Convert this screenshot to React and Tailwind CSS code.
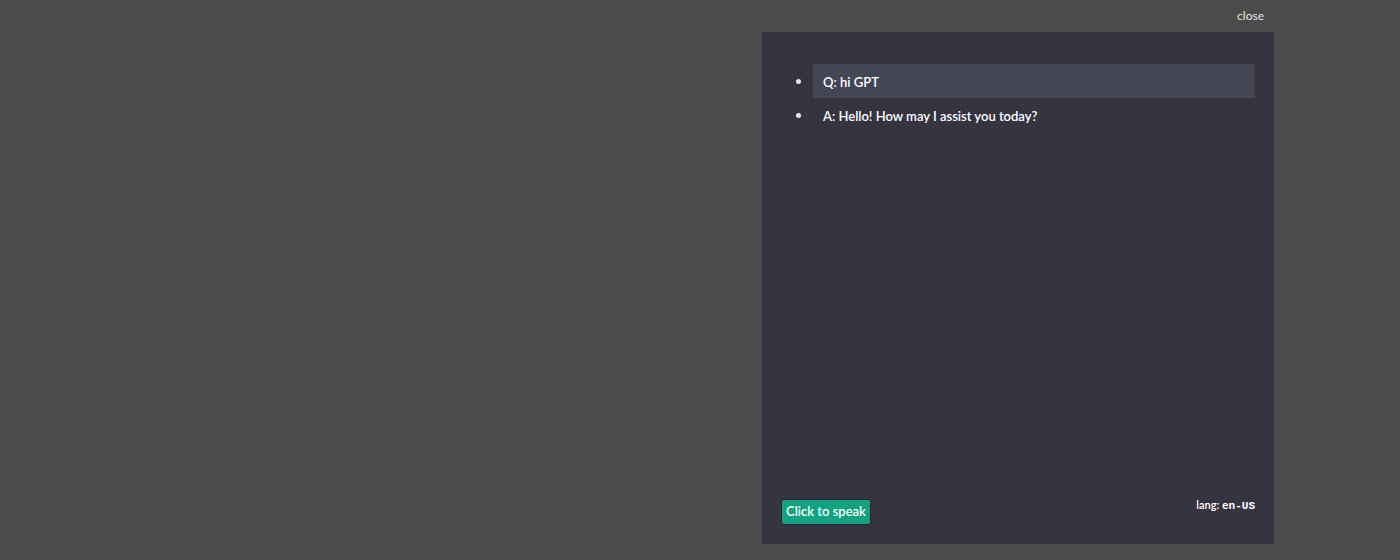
const messages = [
  { text: 'Q: hi GPT', active: true },
  { text: 'A: Hello! How may I assist you today?', active: false },
]

export default function App() {
  return (
    <div
      className="w-[1400px] h-[560px] bg-[#4b4b4b] text-white"
      style={{ fontFamily: 'Lato, "Open Sans", sans-serif' }}
    >
      <div className="flex justify-end pr-[136px] pt-[8px] h-[32px]">
        <span className="text-[12px] leading-[16px] text-[#e6e6e6]">close</span>
      </div>
      <div className="ml-[762px] w-[512px] h-[512px] bg-[#353541] flex flex-col justify-between pl-[19px] pr-[19px] pt-[32px] pb-[19px]">
        <ul className="list-disc pl-[32px] text-[13px] marker:text-[#e6e6e6] marker:text-[15px]">
          {messages.map((m) => (
            <li
              key={m.text}
              className={`h-[34px] leading-[34px] pl-[10px] font-semibold ${
                m.active ? 'bg-[#444654]' : ''
              }`}
            >
              {m.text}
            </li>
          ))}
        </ul>
        <div className="flex items-start justify-between">
          <button className="bg-[#10a37f] border border-[#3a1f3a] rounded-[3px] px-[4px] h-[26px] text-[13px] font-semibold text-white">
            Click to speak
          </button>
          <div className="text-[11px] font-semibold mt-[-1px] leading-[14px]">
            lang: <span className="font-['Liberation_Mono',monospace]">en-US</span>
          </div>
        </div>
      </div>
    </div>
  )
}
